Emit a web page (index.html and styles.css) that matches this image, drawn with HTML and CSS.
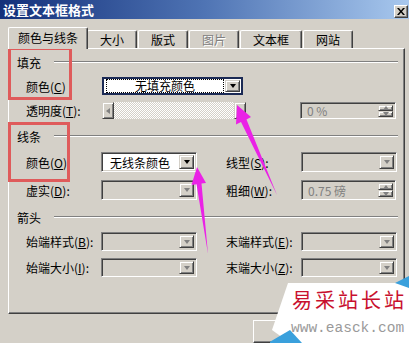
FILE: index.html
```html
<!DOCTYPE html>
<html lang="zh-CN">

<head>
  <meta charset="utf-8">
  <title>设置文本框格式</title>
  <link rel="stylesheet" href="styles.css">
</head>

<body>
  <div class="window">
    <div class="titlebar">
      <span>设置文本框格式</span>
      <div class="close">
        <svg width="8" height="7" viewBox="0 0 8 7"><path d="M0 0h2l2 2.5L6 0h2L5 3.5 8 7H6L4 4.5 2 7H0l3-3.5z" fill="#000"/></svg>
      </div>
    </div>

    <div class="tabs">
      <div class="tab active">颜色与线条</div>
      <div class="tab">大小</div>
      <div class="tab">版式</div>
      <div class="tab disabled">图片</div>
      <div class="tab">文本框</div>
      <div class="tab">网站</div>
    </div>

    <div class="panel">
      <!-- fill -->
      <div class="group first">填充</div>
      <div class="row r-color">
        <span class="lbl">颜色(<u>C</u>)</span>
        <div class="combo focus fill-combo">
          <div class="value"><span class="dotted">无填充颜色</span></div>
          <b class="btn"><i class="tri"></i></b>
        </div>
      </div>
      <div class="row r-alpha">
        <span class="lbl">透明度(<u>T</u>):</span>
        <div class="slider">
          <b class="btn"><i class="tri left"></i></b>
          <div class="track"></div>
          <b class="btn thumb"></b>
        </div>
        <div class="spin disabled">
          <span>0 %</span>
          <div class="spinbtns"><b class="btn"><i class="tri up"></i></b><b class="btn"><i class="tri"></i></b></div>
        </div>
      </div>

      <!-- line -->
      <div class="group">线条</div>
      <div class="row r-line">
        <span class="lbl">颜色(<u>O</u>)</span>
        <div class="combo white">
          <div class="value">无线条颜色</div>
          <b class="btn"><i class="tri"></i></b>
        </div>
        <span class="lbl col2">线型(<u>S</u>):</span>
        <div class="combo disabled"><div class="value"></div><b class="btn"><i class="tri"></i></b></div>
      </div>
      <div class="row r-dash">
        <span class="lbl">虚实(<u>D</u>):</span>
        <div class="combo disabled"><div class="value"></div><b class="btn"><i class="tri"></i></b></div>
        <span class="lbl col2">粗细(<u>W</u>):</span>
        <div class="spin disabled">
          <span>0.75 磅</span>
          <div class="spinbtns"><b class="btn"><i class="tri up"></i></b><b class="btn"><i class="tri"></i></b></div>
        </div>
      </div>

      <!-- arrows -->
      <div class="group">箭头</div>
      <div class="row r-begin">
        <span class="lbl">始端样式(<u>B</u>):</span>
        <div class="combo disabled"><div class="value"></div><b class="btn"><i class="tri"></i></b></div>
        <span class="lbl col2">末端样式(<u>E</u>):</span>
        <div class="combo disabled"><div class="value"></div><b class="btn"><i class="tri"></i></b></div>
      </div>
      <div class="row r-size">
        <span class="lbl">始端大小(<u>I</u>):</span>
        <div class="combo disabled"><div class="value"></div><b class="btn"><i class="tri"></i></b></div>
        <span class="lbl col2">末端大小(<u>Z</u>):</span>
        <div class="combo disabled"><div class="value"></div><b class="btn"><i class="tri"></i></b></div>
      </div>
    </div>

    <div class="footer">
      <div class="pushbtn"></div>
      <div class="pushbtn"></div>
    </div>
  </div>

  <!-- annotations drawn over the dialog -->
  <div class="mark mark-fill"></div>
  <div class="mark mark-line"></div>
  <svg class="arrows" width="409" height="343" viewBox="0 0 409 343">
    <polygon points="237,105 251,117 246.5,119.5 277,195 241,122 236,124.5" fill="#ea22e6"/>
    <polygon points="197,167 206,183 201.5,183.6 208,254 196.5,184.2 191.5,185" fill="#ea22e6"/>
  </svg>

  <div class="watermark">
    <svg class="wm-bg" width="139" height="67" viewBox="0 0 139 67">
      <polygon points="18,7 139,7 139,67 20,67 2,54" fill="#fff"/>
      <polygon points="125,7 139,0 139,12" fill="#3aa0dc"/>
      <polygon points="-2,67 20,54 32,67" fill="#3aa0dc"/>
    </svg>
    <div class="wm-title">易采站长站</div>
    <div class="wm-url">www.easck.com</div>
  </div>
</body>

</html>
```

FILE: styles.css
```css
body {
  margin: 0;
  width: 409px;
  height: 343px;
  overflow: hidden;
  position: relative;
  background-color: #d4d0c8;
  font-family: 'Noto Sans CJK SC', 'DejaVu Sans', sans-serif;
  font-size: 12px;
  color: #000;
}

u {
  text-decoration: underline;
  text-underline-offset: 1px;
}

.window {
  width: 409px;
  height: 343px;
  display: flex;
  flex-direction: column;
}

/* title bar */
.titlebar {
  height: 19px;
  display: flex;
  align-items: center;
  justify-content: space-between;
  padding: 0 1px 0 3px;
  background: linear-gradient(to right, #13307a, #4f74b4 50%, #a8c8ee);
  color: #fff;
  font-weight: bold;
  font-size: 13px;
  line-height: 19px;
}

.close {
  width: 12px;
  height: 11px;
  margin-top: 3px;
  display: flex;
  align-items: center;
  justify-content: center;
  background-color: #d4d0c8;
  border: 1px solid;
  border-color: #fff #404040 #404040 #fff;
  box-shadow: inset -1px -1px #808080;
}

/* tabs */
.tabs {
  display: flex;
  align-items: flex-end;
  height: 21px;
  margin-top: 8px;
  padding-left: 8px;
}

.tab {
  height: 17px;
  line-height: 17px;
  padding: 0 12px;
  border: 1px solid;
  border-bottom: none;
  border-color: #fff #404040 #fff #fff;
  border-radius: 2px 2px 0 0;
  box-shadow: inset -1px 0 #808080;
  margin-right: 1px;
}

.tab.active {
  height: 21px;
  line-height: 20px;
  padding: 0 9px;
  margin: 0 -1px -1px 0;
  position: relative;
  z-index: 1;
  background-color: #d4d0c8;
}

.tab.disabled {
  color: #808080;
  text-shadow: 1px 1px #fff;
}

/* main panel */
.panel {
  width: 395px;
  height: 266px;
  margin-left: 8px;
  border: 1px solid;
  border-color: #fff #404040 #404040 #fff;
  box-shadow: inset -1px -1px #808080;
}

.group {
  display: flex;
  align-items: center;
  height: 16px;
  margin: 9px 6px 0 8px;
}

.group.first {
  margin-top: 5px;
}

.group::after {
  content: '';
  flex: 1;
  margin-left: 13px;
  border-top: 1px solid #808080;
  border-bottom: 1px solid #fff;
}

.row {
  display: flex;
  align-items: center;
  padding-left: 17px;
  margin-top: 8px;
  height: 20px;
}

.r-color { margin-top: 7px; height: 18px; }
.r-alpha { margin-top: 7px; height: 17px; }
.r-begin, .r-size { margin-top: 7px; height: 19px; }

.lbl {
  width: 75px;
  flex: none;
  white-space: nowrap;
}

.lbl.col2 {
  margin-left: 29px;
}

/* controls */
.btn {
  display: flex;
  align-items: center;
  justify-content: center;
  box-sizing: border-box;
  background-color: #d4d0c8;
  border: 1px solid;
  border-color: #d4d0c8 #404040 #404040 #d4d0c8;
  box-shadow: inset 1px 1px #fff, inset -1px -1px #808080;
}

.tri {
  width: 0;
  height: 0;
  border-left: 3.5px solid transparent;
  border-right: 3.5px solid transparent;
  border-top: 4px solid #000;
}

.tri.up {
  border-top: none;
  border-bottom: 4px solid #000;
}

.tri.left {
  border: none;
  border-top: 3.5px solid transparent;
  border-bottom: 3.5px solid transparent;
  border-right: 4px solid #808080;
}

.disabled .tri {
  border-top-color: #808080;
  border-bottom-color: #808080;
}

.combo,
.spin {
  display: flex;
  box-sizing: border-box;
  width: 96px;
  height: 100%;
  padding: 2px;
  background-color: #d4d0c8;
  border: 1px solid;
  border-color: #808080 #fff #fff #808080;
  box-shadow: inset 1px 1px #404040, inset -1px -1px #d4d0c8;
}

.combo .value {
  flex: 1;
  display: flex;
  align-items: center;
  padding-left: 6px;
  white-space: nowrap;
}

.combo .btn {
  width: 15px;
}

.combo.white {
  background-color: #fff;
}

.fill-combo {
  width: 141px;
  margin-left: 1px;
  background-color: #fff;
  border: 2px solid #1b2a55;
  box-shadow: none;
  padding: 1px;
}

.fill-combo .value {
  justify-content: center;
  padding: 1px;
}

.dotted {
  flex: 1;
  text-align: center;
  line-height: 12px;
  border: 1px dotted #000;
}

.spin {
  width: 96px;
  align-items: stretch;
  color: #808080;
}

.spin span {
  flex: 1;
  display: flex;
  align-items: center;
  padding-left: 4px;
  white-space: nowrap;
}

.spinbtns {
  width: 15px;
  display: flex;
  flex-direction: column;
}

.spinbtns .btn {
  flex: 1;
}

.r-alpha .spin {
  margin-left: 54px;
  height: 17px;
}

.r-dash .spin {
  width: 95px;
}

/* slider */
.slider {
  display: flex;
  width: 144px;
  height: 100%;
  margin-left: 1px;
}

.slider .btn {
  width: 12px;
}

.track {
  flex: 1;
  background-color: #fff;
  background-image: repeating-conic-gradient(#d4d0c8 0 25%, #fff 0 50%);
  background-size: 2px 2px;
}

/* footer buttons */
.footer {
  flex: 1;
  display: flex;
  justify-content: flex-end;
  gap: 6px;
  padding: 6px 4px 0 0;
}

.pushbtn {
  width: 73px;
  height: 23px;
  box-sizing: border-box;
  border: 1px solid;
  border-color: #fff #404040 #404040 #fff;
  box-shadow: inset -1px -1px #808080;
}

/* annotations */
.mark {
  position: absolute;
  border: 3px solid #df5b5b;
  box-sizing: border-box;
}

.mark-fill {
  left: 8px;
  top: 47px;
  width: 64px;
  height: 53px;
}

.mark-line {
  left: 8px;
  top: 122px;
  width: 62px;
  height: 60px;
}

.arrows {
  position: absolute;
  left: 0;
  top: 0;
}

.watermark {
  position: absolute;
  left: 270px;
  top: 276px;
  width: 139px;
  height: 67px;
}

.wm-bg {
  position: absolute;
  left: 0;
  top: 0;
}

.wm-title {
  position: absolute;
  left: 22px;
  top: 12px;
  font-size: 20px;
  line-height: 24px;
  letter-spacing: 3px;
  color: #c8102e;
  white-space: nowrap;
}

.wm-url {
  position: absolute;
  left: 21px;
  top: 44px;
  font-family: 'Liberation Mono', monospace;
  font-size: 14.5px;
  line-height: 16px;
  color: #9a9a9a;
  white-space: nowrap;
}
```
